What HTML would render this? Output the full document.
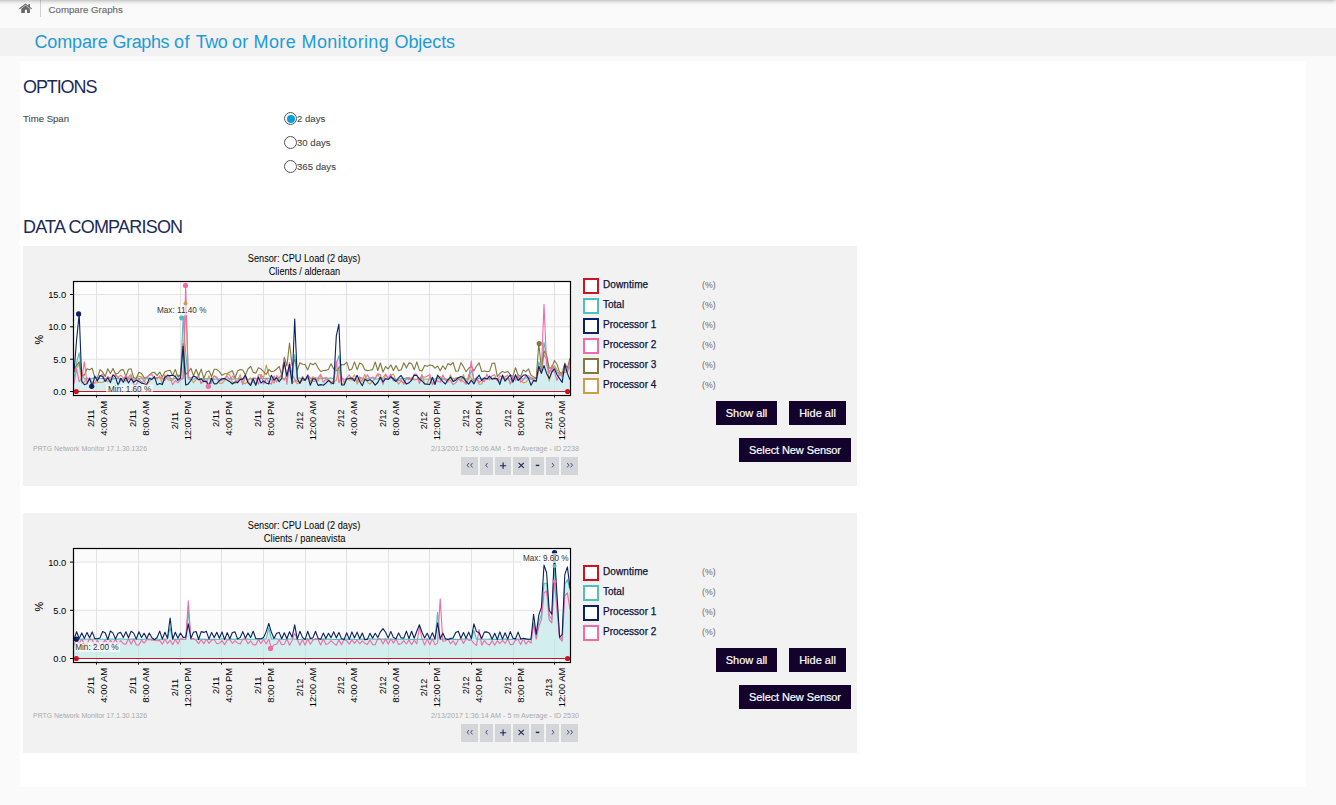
<!DOCTYPE html>
<html><head><meta charset="utf-8"><title>Compare Graphs</title>
<style>
html,body{margin:0;padding:0}
body{width:1336px;height:805px;overflow:hidden;background:#fafafa;font-family:"Liberation Sans", sans-serif;position:relative}
.abs{position:absolute}
#shadow{position:absolute;left:-20px;top:-20px;width:1356px;height:20px;background:#888;box-shadow:0 0 5px rgba(0,0,0,.42)}
#crumbtxt{position:absolute;left:48.5px;top:3.7px;font-size:9.7px;line-height:12px;color:#6a6a6a;white-space:nowrap;-webkit-text-stroke:0.15px #6a6a6a}
#band{position:absolute;left:0;top:28px;width:1336px;height:28px;background:#f2f2f2}
#title{position:absolute;left:34.5px;top:30px;font-size:18px;line-height:24px;color:#1f9bd7;white-space:pre}
#main{position:absolute;left:20px;top:61px;width:1286px;height:726px;background:#fff}
h2{position:absolute;margin:0;font-weight:normal;font-size:18px;line-height:22px;color:#1a2b5a;left:23px;white-space:nowrap}
.lbl{position:absolute;font-size:9.6px;line-height:12px;color:#484848;white-space:nowrap;-webkit-text-stroke:0.1px #484848}
.radio{position:absolute;left:284px;width:11px;height:11px;border:1px solid #555;border-radius:50%;background:#fff}
.radio.on:after{content:"";position:absolute;left:1.5px;top:1.5px;width:8px;height:8px;border-radius:50%;background:#0a9fdb}
.panel{position:absolute;left:23px;width:834px;height:240px;background:#f2f2f2}
.chart{position:absolute;left:0;top:0}
.lg{position:absolute;left:560px;height:16px;width:200px}
.bx{position:absolute;left:0;top:0;width:12px;height:12px;border:2px solid #000;background:#fff}
.nm{position:absolute;left:20px;top:1px;font-size:10px;line-height:12px;color:#0c1238;white-space:nowrap;-webkit-text-stroke:0.25px #0c1238}
.un{position:absolute;left:118.8px;top:1px;font-size:9.8px;line-height:12px;color:#6a6a6a;transform:scaleX(0.89);transform-origin:0 0}
.btn{position:absolute;height:24px;line-height:24px;background:#13022b;color:#fff;font-size:11px;text-align:center;white-space:nowrap;-webkit-text-stroke:0.2px #fff}
</style></head><body>
<div id="shadow"></div>
<svg class="abs" style="left:0;top:0" width="60" height="20" viewBox="0 0 60 20"><path d="M25.5 3.6 L28.4 5.7 V3.9 H30 V6.9 L32.1 8.5 L31.4 9.3 L25.5 5 L19.6 9.3 L18.9 8.5 Z M21.2 8.7 L25.5 5.6 L29.9 8.7 V13 H27 V9.8 H24.9 V13 H21.2 Z" fill="#6a6a6a"/><rect x="40" y="0" width="1" height="17" fill="#000" opacity="0.17"/></svg>
<div id="crumbtxt">Compare Graphs</div>
<div id="band"></div>
<div id="title"><span style="letter-spacing:-0.145px">Compare </span><span style="letter-spacing:-0.360px">Graphs </span><span style="letter-spacing:0.570px">of </span><span style="letter-spacing:-0.410px">Two </span><span style="letter-spacing:0.170px">or </span><span style="letter-spacing:0.400px">More </span><span style="letter-spacing:0.350px">Monitoring </span><span style="letter-spacing:-0.060px">Objects</span></div>
<div id="main"></div>
<h2 style="top:76px;letter-spacing:-1.1px">OPTIONS</h2>
<div class="lbl" style="left:23px;top:113px">Time Span</div>
<div class="radio on" style="top:112px"></div><div class="lbl r" style="left:297px;top:113px">2 days</div>
<div class="radio" style="top:136px"></div><div class="lbl r" style="left:297px;top:137px">30 days</div>
<div class="radio" style="top:160px"></div><div class="lbl r" style="left:297px;top:161px">365 days</div>
<h2 style="top:216px;letter-spacing:-0.78px">DATA COMPARISON</h2>
<div class="panel" style="top:246px">
<svg class="chart" width="834" height="240" viewBox="23 246 834 240" font-family='"Liberation Sans", sans-serif'>
<rect x="73.5" y="281.5" width="497.0" height="114.0" fill="#fff"/>
<rect x="73.5" y="359.2" width="497.0" height="32.3" fill="#fbfbfb"/>
<rect x="73.5" y="294.5" width="497.0" height="32.3" fill="#fbfbfb"/>
<line x1="96.5" y1="281.5" x2="96.5" y2="395.5" stroke="#e2e2e2" stroke-width="1"/>
<line x1="138.5" y1="281.5" x2="138.5" y2="395.5" stroke="#e2e2e2" stroke-width="1"/>
<line x1="180.5" y1="281.5" x2="180.5" y2="395.5" stroke="#e2e2e2" stroke-width="1"/>
<line x1="221.5" y1="281.5" x2="221.5" y2="395.5" stroke="#e2e2e2" stroke-width="1"/>
<line x1="263.5" y1="281.5" x2="263.5" y2="395.5" stroke="#e2e2e2" stroke-width="1"/>
<line x1="305.5" y1="281.5" x2="305.5" y2="395.5" stroke="#e2e2e2" stroke-width="1"/>
<line x1="346.5" y1="281.5" x2="346.5" y2="395.5" stroke="#e2e2e2" stroke-width="1"/>
<line x1="388.5" y1="281.5" x2="388.5" y2="395.5" stroke="#e2e2e2" stroke-width="1"/>
<line x1="429.5" y1="281.5" x2="429.5" y2="395.5" stroke="#e2e2e2" stroke-width="1"/>
<line x1="471.5" y1="281.5" x2="471.5" y2="395.5" stroke="#e2e2e2" stroke-width="1"/>
<line x1="513.5" y1="281.5" x2="513.5" y2="395.5" stroke="#e2e2e2" stroke-width="1"/>
<line x1="554.5" y1="281.5" x2="554.5" y2="395.5" stroke="#e2e2e2" stroke-width="1"/>
<line x1="73.5" y1="294.5" x2="570.5" y2="294.5" stroke="#e2e2e2" stroke-width="1"/>
<line x1="73.5" y1="326.8" x2="570.5" y2="326.8" stroke="#e2e2e2" stroke-width="1"/>
<line x1="73.5" y1="359.2" x2="570.5" y2="359.2" stroke="#e2e2e2" stroke-width="1"/>
<polygon points="74.0,391.5 74.0,378.6 76.6,362.4 79.2,352.7 81.8,372.1 84.4,378.9 87.0,378.5 89.6,379.2 92.2,378.4 94.8,377.8 97.4,378.3 100.0,378.5 102.6,378.3 105.2,378.7 107.8,377.9 110.4,379.0 113.0,378.9 115.5,378.6 118.1,378.4 120.7,378.2 123.3,379.0 125.9,378.3 128.5,378.0 131.1,379.0 133.7,379.2 136.3,378.8 138.9,378.7 141.5,378.0 144.1,378.9 146.7,378.0 149.3,378.1 151.9,378.3 154.5,378.1 157.1,378.2 159.7,377.8 162.3,379.1 164.9,378.0 167.5,377.8 170.1,378.3 172.7,379.1 175.3,378.2 177.9,378.7 180.5,378.0 183.1,317.8 185.7,352.7 188.3,378.9 190.9,379.3 193.5,379.2 196.1,378.2 198.6,379.3 201.2,378.7 203.8,378.4 206.4,378.9 209.0,378.8 211.6,378.2 214.2,379.0 216.8,379.1 219.4,379.0 222.0,378.6 224.6,379.2 227.2,379.2 229.8,378.3 232.4,379.1 235.0,378.5 237.6,378.7 240.2,378.5 242.8,378.7 245.4,378.3 248.0,379.2 250.6,378.7 253.2,378.3 255.8,378.7 258.4,379.3 261.0,378.2 263.6,378.6 266.2,378.4 268.8,378.4 271.4,379.3 274.0,378.7 276.6,378.6 279.2,379.3 281.7,379.1 284.3,378.3 286.9,379.2 289.5,368.9 292.1,378.4 294.7,354.6 297.3,377.9 299.9,378.0 302.5,379.0 305.1,378.5 307.7,378.8 310.3,378.0 312.9,378.2 315.5,377.8 318.1,378.3 320.7,378.7 323.3,378.4 325.9,377.9 328.5,378.2 331.1,377.9 333.7,379.1 336.3,364.3 338.9,355.3 341.5,378.0 344.1,379.2 346.7,378.9 349.3,377.8 351.9,378.4 354.5,378.7 357.1,379.2 359.7,377.9 362.3,378.1 364.8,379.0 367.4,378.6 370.0,378.1 372.6,377.8 375.2,379.2 377.8,378.7 380.4,378.3 383.0,379.0 385.6,378.2 388.2,379.3 390.8,378.2 393.4,377.9 396.0,379.3 398.6,379.0 401.2,378.6 403.8,378.4 406.4,379.2 409.0,378.2 411.6,378.1 414.2,379.0 416.8,379.2 419.4,378.1 422.0,378.8 424.6,379.0 427.2,379.2 429.8,378.9 432.4,379.0 435.0,379.1 437.6,378.2 440.2,379.3 442.8,379.2 445.4,378.8 447.9,379.3 450.5,378.7 453.1,378.2 455.7,378.8 458.3,378.0 460.9,377.9 463.5,379.1 466.1,378.7 468.7,379.3 471.3,370.2 473.9,378.9 476.5,379.2 479.1,378.2 481.7,378.3 484.3,378.8 486.9,378.6 489.5,378.9 492.1,378.3 494.7,378.2 497.3,379.3 499.9,379.3 502.5,378.4 505.1,379.2 507.7,378.5 510.3,379.3 512.9,378.8 515.5,377.9 518.1,378.0 520.7,378.6 523.3,378.9 525.9,377.8 528.5,377.9 531.0,379.2 533.6,377.9 536.2,378.6 538.8,361.8 541.4,369.5 544.0,342.4 546.6,356.6 549.2,372.7 551.8,368.2 554.4,366.3 557.0,372.1 559.6,374.0 562.2,376.6 564.8,366.3 567.4,370.8 570.0,366.9 570.0,391.5" fill="#d3eeee"/>
<line x1="96.5" y1="378.6" x2="96.5" y2="391.5" stroke="#c9dede" stroke-width="1" opacity="0.6"/>
<line x1="138.5" y1="378.6" x2="138.5" y2="391.5" stroke="#c9dede" stroke-width="1" opacity="0.6"/>
<line x1="180.5" y1="378.6" x2="180.5" y2="391.5" stroke="#c9dede" stroke-width="1" opacity="0.6"/>
<line x1="221.5" y1="378.6" x2="221.5" y2="391.5" stroke="#c9dede" stroke-width="1" opacity="0.6"/>
<line x1="263.5" y1="378.6" x2="263.5" y2="391.5" stroke="#c9dede" stroke-width="1" opacity="0.6"/>
<line x1="305.5" y1="378.6" x2="305.5" y2="391.5" stroke="#c9dede" stroke-width="1" opacity="0.6"/>
<line x1="346.5" y1="378.6" x2="346.5" y2="391.5" stroke="#c9dede" stroke-width="1" opacity="0.6"/>
<line x1="388.5" y1="378.6" x2="388.5" y2="391.5" stroke="#c9dede" stroke-width="1" opacity="0.6"/>
<line x1="429.5" y1="378.6" x2="429.5" y2="391.5" stroke="#c9dede" stroke-width="1" opacity="0.6"/>
<line x1="471.5" y1="378.6" x2="471.5" y2="391.5" stroke="#c9dede" stroke-width="1" opacity="0.6"/>
<line x1="513.5" y1="378.6" x2="513.5" y2="391.5" stroke="#c9dede" stroke-width="1" opacity="0.6"/>
<line x1="554.5" y1="378.6" x2="554.5" y2="391.5" stroke="#c9dede" stroke-width="1" opacity="0.6"/>
<polyline points="74.0,378.6 76.6,362.4 79.2,352.7 81.8,372.1 84.4,378.9 87.0,378.5 89.6,379.2 92.2,378.4 94.8,377.8 97.4,378.3 100.0,378.5 102.6,378.3 105.2,378.7 107.8,377.9 110.4,379.0 113.0,378.9 115.5,378.6 118.1,378.4 120.7,378.2 123.3,379.0 125.9,378.3 128.5,378.0 131.1,379.0 133.7,379.2 136.3,378.8 138.9,378.7 141.5,378.0 144.1,378.9 146.7,378.0 149.3,378.1 151.9,378.3 154.5,378.1 157.1,378.2 159.7,377.8 162.3,379.1 164.9,378.0 167.5,377.8 170.1,378.3 172.7,379.1 175.3,378.2 177.9,378.7 180.5,378.0 183.1,317.8 185.7,352.7 188.3,378.9 190.9,379.3 193.5,379.2 196.1,378.2 198.6,379.3 201.2,378.7 203.8,378.4 206.4,378.9 209.0,378.8 211.6,378.2 214.2,379.0 216.8,379.1 219.4,379.0 222.0,378.6 224.6,379.2 227.2,379.2 229.8,378.3 232.4,379.1 235.0,378.5 237.6,378.7 240.2,378.5 242.8,378.7 245.4,378.3 248.0,379.2 250.6,378.7 253.2,378.3 255.8,378.7 258.4,379.3 261.0,378.2 263.6,378.6 266.2,378.4 268.8,378.4 271.4,379.3 274.0,378.7 276.6,378.6 279.2,379.3 281.7,379.1 284.3,378.3 286.9,379.2 289.5,368.9 292.1,378.4 294.7,354.6 297.3,377.9 299.9,378.0 302.5,379.0 305.1,378.5 307.7,378.8 310.3,378.0 312.9,378.2 315.5,377.8 318.1,378.3 320.7,378.7 323.3,378.4 325.9,377.9 328.5,378.2 331.1,377.9 333.7,379.1 336.3,364.3 338.9,355.3 341.5,378.0 344.1,379.2 346.7,378.9 349.3,377.8 351.9,378.4 354.5,378.7 357.1,379.2 359.7,377.9 362.3,378.1 364.8,379.0 367.4,378.6 370.0,378.1 372.6,377.8 375.2,379.2 377.8,378.7 380.4,378.3 383.0,379.0 385.6,378.2 388.2,379.3 390.8,378.2 393.4,377.9 396.0,379.3 398.6,379.0 401.2,378.6 403.8,378.4 406.4,379.2 409.0,378.2 411.6,378.1 414.2,379.0 416.8,379.2 419.4,378.1 422.0,378.8 424.6,379.0 427.2,379.2 429.8,378.9 432.4,379.0 435.0,379.1 437.6,378.2 440.2,379.3 442.8,379.2 445.4,378.8 447.9,379.3 450.5,378.7 453.1,378.2 455.7,378.8 458.3,378.0 460.9,377.9 463.5,379.1 466.1,378.7 468.7,379.3 471.3,370.2 473.9,378.9 476.5,379.2 479.1,378.2 481.7,378.3 484.3,378.8 486.9,378.6 489.5,378.9 492.1,378.3 494.7,378.2 497.3,379.3 499.9,379.3 502.5,378.4 505.1,379.2 507.7,378.5 510.3,379.3 512.9,378.8 515.5,377.9 518.1,378.0 520.7,378.6 523.3,378.9 525.9,377.8 528.5,377.9 531.0,379.2 533.6,377.9 536.2,378.6 538.8,361.8 541.4,369.5 544.0,342.4 546.6,356.6 549.2,372.7 551.8,368.2 554.4,366.3 557.0,372.1 559.6,374.0 562.2,376.6 564.8,366.3 567.4,370.8 570.0,366.9" fill="none" stroke="#4dc0bb" stroke-width="1.1" stroke-linejoin="round"/>
<polyline points="74.0,372.1 76.6,368.2 79.2,364.3 81.8,383.0 84.4,382.0 87.0,377.7 89.6,380.2 92.2,382.4 94.8,383.3 97.4,382.4 100.0,382.5 102.6,382.3 105.2,380.3 107.8,381.6 110.4,379.7 113.0,379.0 115.5,374.5 118.1,377.3 120.7,375.1 123.3,377.9 125.9,381.4 128.5,377.0 131.1,374.4 133.7,382.1 136.3,378.6 138.9,376.2 141.5,376.9 144.1,381.2 146.7,384.1 149.3,381.7 151.9,378.7 154.5,378.1 157.1,379.3 159.7,375.7 162.3,384.2 164.9,374.7 167.5,379.3 170.1,380.5 172.7,380.2 175.3,375.2 177.9,374.8 180.5,378.8 183.1,378.6 185.7,303.5 188.3,376.0 190.9,379.2 193.5,382.6 196.1,379.6 198.6,375.4 201.2,383.7 203.8,378.9 206.4,382.2 209.0,375.7 211.6,383.3 214.2,375.9 216.8,377.1 219.4,383.3 222.0,383.3 224.6,380.7 227.2,374.2 229.8,374.9 232.4,382.3 235.0,383.5 237.6,380.8 240.2,374.6 242.8,382.8 245.4,383.8 248.0,380.7 250.6,377.9 253.2,382.2 255.8,383.8 258.4,374.9 261.0,374.7 263.6,377.8 266.2,365.0 268.8,374.5 271.4,379.7 274.0,383.3 276.6,375.3 279.2,378.0 281.7,375.7 284.3,380.3 286.9,375.3 289.5,363.7 292.1,383.4 294.7,380.4 297.3,383.9 299.9,381.9 302.5,376.2 305.1,380.2 307.7,375.6 310.3,382.1 312.9,376.5 315.5,379.4 318.1,381.1 320.7,375.9 323.3,378.4 325.9,377.4 328.5,379.1 331.1,384.3 333.7,381.7 336.3,380.6 338.9,366.9 341.5,383.2 344.1,384.2 346.7,379.0 349.3,380.1 351.9,378.9 354.5,374.7 357.1,384.1 359.7,379.5 362.3,381.3 364.8,374.2 367.4,382.1 370.0,384.2 372.6,381.2 375.2,378.4 377.8,374.1 380.4,379.4 383.0,377.4 385.6,374.5 388.2,379.0 390.8,375.5 393.4,374.1 396.0,380.0 398.6,384.1 401.2,380.8 403.8,383.1 406.4,377.5 409.0,379.9 411.6,378.3 414.2,380.0 416.8,379.3 419.4,380.2 422.0,374.4 424.6,384.0 427.2,383.8 429.8,376.9 432.4,384.0 435.0,382.5 437.6,377.5 440.2,376.7 442.8,378.5 445.4,379.5 447.9,382.1 450.5,374.7 453.1,381.3 455.7,377.8 458.3,377.5 460.9,381.8 463.5,374.5 466.1,384.3 468.7,374.6 471.3,378.1 473.9,380.7 476.5,378.2 479.1,384.3 481.7,384.0 484.3,377.7 486.9,378.9 489.5,377.7 492.1,379.1 494.7,377.4 497.3,379.2 499.9,381.9 502.5,377.0 505.1,378.1 507.7,378.5 510.3,383.2 512.9,380.2 515.5,378.8 518.1,376.6 520.7,380.3 523.3,382.9 525.9,382.2 528.5,378.9 531.0,377.1 533.6,378.9 536.2,381.8 538.8,369.5 541.4,372.1 544.0,354.3 546.6,359.2 549.2,381.2 551.8,370.8 554.4,365.6 557.0,369.5 559.6,375.3 562.2,373.4 564.8,369.5 567.4,372.1 570.0,361.8" fill="none" stroke="#cf9c4c" stroke-width="1.1" stroke-linejoin="round"/>
<polyline points="74.0,368.9 76.6,365.6 79.2,361.8 81.8,375.1 84.4,375.1 87.0,368.7 89.6,369.8 92.2,368.3 94.8,377.7 97.4,377.8 100.0,369.6 102.6,371.8 105.2,376.6 107.8,368.7 110.4,373.5 113.0,368.6 115.5,374.1 118.1,373.2 120.7,370.1 123.3,369.6 125.9,376.4 128.5,369.2 131.1,368.8 133.7,377.9 136.3,378.3 138.9,372.3 141.5,373.6 144.1,377.6 146.7,377.7 149.3,374.9 151.9,372.9 154.5,372.3 157.1,375.6 159.7,372.1 162.3,377.1 164.9,371.7 167.5,370.8 170.1,370.2 172.7,375.5 175.3,369.4 177.9,377.0 180.5,374.5 183.1,343.6 185.7,374.3 188.3,372.3 190.9,368.3 193.5,375.9 196.1,369.3 198.6,376.0 201.2,369.1 203.8,378.3 206.4,372.3 209.0,370.8 211.6,376.7 214.2,369.3 216.8,369.3 219.4,371.6 222.0,375.4 224.6,373.8 227.2,373.5 229.8,372.0 232.4,370.8 235.0,378.0 237.6,371.0 240.2,369.5 242.8,370.0 245.4,375.1 248.0,369.0 250.6,366.3 253.2,372.4 255.8,373.2 258.4,367.8 261.0,368.9 263.6,371.7 266.2,374.5 268.8,369.4 271.4,371.8 274.0,371.0 276.6,369.2 279.2,366.4 281.7,375.1 284.3,357.2 286.9,366.0 289.5,343.0 292.1,365.6 294.7,359.2 297.3,370.3 299.9,362.8 302.5,364.3 305.1,364.5 307.7,370.0 310.3,363.1 312.9,364.7 315.5,363.0 318.1,368.1 320.7,371.5 323.3,370.5 325.9,370.4 328.5,369.3 331.1,363.7 333.7,369.1 336.3,370.6 338.9,368.2 341.5,364.6 344.1,364.8 346.7,362.1 349.3,370.3 351.9,368.9 354.5,361.9 357.1,369.7 359.7,362.9 362.3,364.2 364.8,369.9 367.4,370.6 370.0,370.2 372.6,369.6 375.2,362.0 377.8,370.5 380.4,363.0 383.0,372.0 385.6,366.6 388.2,369.0 390.8,364.8 393.4,370.5 396.0,365.6 398.6,370.8 401.2,369.7 403.8,362.8 406.4,368.0 409.0,362.9 411.6,363.6 414.2,369.8 416.8,361.9 419.4,370.2 422.0,371.1 424.6,365.4 427.2,366.3 429.8,365.1 432.4,365.5 435.0,368.2 437.6,366.0 440.2,370.7 442.8,365.7 445.4,369.4 447.9,363.6 450.5,365.1 453.1,362.5 455.7,371.2 458.3,371.0 460.9,362.6 463.5,366.8 466.1,371.8 468.7,368.2 471.3,366.2 473.9,370.9 476.5,366.1 479.1,362.8 481.7,371.5 484.3,371.0 486.9,371.6 489.5,371.3 492.1,363.3 494.7,363.1 497.3,376.7 499.9,373.5 502.5,371.4 505.1,372.4 507.7,371.4 510.3,374.7 512.9,376.6 515.5,367.7 518.1,375.0 520.7,376.4 523.3,369.9 525.9,371.7 528.5,368.8 531.0,375.3 533.6,376.9 536.2,378.6 538.8,343.6 541.4,368.2 544.0,350.8 546.6,355.3 549.2,368.2 551.8,367.6 554.4,360.5 557.0,364.3 559.6,372.1 562.2,373.4 564.8,363.0 567.4,368.2 570.0,357.9" fill="none" stroke="#7f7a3e" stroke-width="1.1" stroke-linejoin="round"/>
<polyline points="74.0,383.7 76.6,368.9 79.2,381.8 81.8,377.7 84.4,361.8 87.0,383.2 89.6,377.7 92.2,383.4 94.8,382.7 97.4,379.3 100.0,376.6 102.6,374.0 105.2,380.6 107.8,376.5 110.4,378.2 113.0,375.2 115.5,375.0 118.1,377.4 120.7,381.2 123.3,379.6 125.9,375.1 128.5,379.6 131.1,376.2 133.7,384.6 136.3,384.6 138.9,378.8 141.5,382.0 144.1,381.7 146.7,376.9 149.3,375.5 151.9,374.6 154.5,378.5 157.1,377.6 159.7,377.2 162.3,378.1 164.9,380.6 167.5,374.4 170.1,377.4 172.7,384.7 175.3,380.5 177.9,382.8 180.5,379.8 183.1,378.6 185.7,285.4 188.3,377.3 190.9,378.2 193.5,376.0 196.1,377.2 198.6,376.7 201.2,383.5 203.8,379.8 206.4,382.6 209.0,386.3 211.6,380.3 214.2,375.9 216.8,378.1 219.4,381.0 222.0,380.2 224.6,378.1 227.2,376.2 229.8,379.8 232.4,376.2 235.0,378.7 237.6,383.0 240.2,377.7 242.8,384.5 245.4,376.1 248.0,381.5 250.6,384.7 253.2,378.1 255.8,378.1 258.4,384.2 261.0,374.7 263.6,384.1 266.2,378.3 268.8,382.2 271.4,384.2 274.0,375.8 276.6,382.0 279.2,377.7 281.7,374.1 284.3,359.8 286.9,384.5 289.5,362.4 292.1,373.9 294.7,379.5 297.3,381.3 299.9,382.6 302.5,380.1 305.1,380.4 307.7,374.6 310.3,378.2 312.9,381.4 315.5,381.3 318.1,377.9 320.7,374.3 323.3,382.3 325.9,379.4 328.5,379.9 331.1,382.2 333.7,380.9 336.3,361.1 338.9,382.8 341.5,376.8 344.1,382.6 346.7,377.9 349.3,374.9 351.9,380.2 354.5,378.6 357.1,381.6 359.7,376.8 362.3,379.0 364.8,378.8 367.4,374.9 370.0,378.9 372.6,377.1 375.2,378.5 377.8,373.7 380.4,374.7 383.0,384.6 385.6,374.0 388.2,378.3 390.8,374.1 393.4,381.1 396.0,380.1 398.6,380.7 401.2,380.0 403.8,384.3 406.4,377.8 409.0,377.5 411.6,380.2 414.2,374.1 416.8,374.3 419.4,383.5 422.0,376.3 424.6,377.2 427.2,376.2 429.8,374.4 432.4,384.7 435.0,381.4 437.6,380.7 440.2,382.4 442.8,375.0 445.4,380.2 447.9,379.5 450.5,380.6 453.1,384.6 455.7,382.9 458.3,379.2 460.9,380.0 463.5,381.6 466.1,384.1 468.7,378.0 471.3,361.1 473.9,381.2 476.5,377.2 479.1,382.4 481.7,380.3 484.3,381.8 486.9,374.1 489.5,380.0 492.1,375.7 494.7,374.9 497.3,380.7 499.9,375.7 502.5,377.3 505.1,376.8 507.7,375.2 510.3,384.2 512.9,376.3 515.5,380.5 518.1,374.9 520.7,382.2 523.3,380.0 525.9,375.9 528.5,375.7 531.0,378.3 533.6,380.9 536.2,381.2 538.8,366.3 541.4,370.2 544.0,304.2 546.6,364.3 549.2,373.4 551.8,365.6 554.4,372.1 557.0,380.5 559.6,373.4 562.2,374.7 564.8,372.1 567.4,372.1 570.0,360.5" fill="none" stroke="#f06ba8" stroke-width="1.1" stroke-linejoin="round"/>
<polyline points="74.0,372.1 76.6,339.8 79.2,313.9 81.8,381.2 84.4,384.8 87.0,383.7 89.6,378.3 92.2,386.3 94.8,376.1 97.4,381.1 100.0,375.6 102.6,376.5 105.2,381.5 107.8,377.7 110.4,382.6 113.0,374.9 115.5,377.2 118.1,385.5 120.7,378.2 123.3,382.3 125.9,377.4 128.5,383.0 131.1,378.7 133.7,382.4 136.3,380.1 138.9,381.5 141.5,383.1 144.1,383.8 146.7,385.0 149.3,378.4 151.9,379.4 154.5,376.6 157.1,384.8 159.7,383.6 162.3,384.6 164.9,377.3 167.5,375.6 170.1,375.6 172.7,375.3 175.3,376.4 177.9,380.4 180.5,378.2 183.1,346.2 185.7,385.0 188.3,383.9 190.9,380.2 193.5,376.1 196.1,377.2 198.6,379.8 201.2,378.8 203.8,381.6 206.4,381.3 209.0,385.5 211.6,378.1 214.2,383.9 216.8,383.6 219.4,380.6 222.0,378.8 224.6,378.5 227.2,380.1 229.8,381.7 232.4,384.0 235.0,381.8 237.6,382.7 240.2,379.5 242.8,379.1 245.4,375.0 248.0,382.7 250.6,385.5 253.2,378.7 255.8,385.4 258.4,377.0 261.0,383.1 263.6,380.9 266.2,383.0 268.8,384.0 271.4,375.2 274.0,380.3 276.6,377.5 279.2,381.8 281.7,378.3 284.3,362.4 286.9,376.1 289.5,364.3 292.1,383.7 294.7,319.1 297.3,378.6 299.9,383.4 302.5,377.8 305.1,380.4 307.7,375.6 310.3,385.3 312.9,378.7 315.5,379.1 318.1,385.4 320.7,384.6 323.3,385.2 325.9,383.2 328.5,380.5 331.1,382.7 333.7,383.7 336.3,335.9 338.9,324.2 341.5,385.0 344.1,385.0 346.7,378.8 349.3,378.5 351.9,378.0 354.5,381.1 357.1,375.2 359.7,381.4 362.3,385.7 364.8,379.4 367.4,380.7 370.0,379.7 372.6,381.6 375.2,385.1 377.8,382.5 380.4,377.3 383.0,382.0 385.6,378.7 388.2,379.5 390.8,376.7 393.4,379.0 396.0,381.5 398.6,377.7 401.2,375.5 403.8,380.1 406.4,384.1 409.0,382.8 411.6,380.2 414.2,375.1 416.8,375.5 419.4,378.8 422.0,381.0 424.6,383.9 427.2,384.2 429.8,384.4 432.4,377.2 435.0,384.5 437.6,375.1 440.2,378.5 442.8,381.6 445.4,384.0 447.9,379.8 450.5,377.0 453.1,381.4 455.7,380.2 458.3,377.7 460.9,376.6 463.5,377.6 466.1,381.5 468.7,384.1 471.3,380.1 473.9,383.9 476.5,378.8 479.1,375.1 481.7,380.4 484.3,377.9 486.9,379.1 489.5,376.1 492.1,379.1 494.7,378.5 497.3,378.9 499.9,384.4 502.5,375.0 505.1,381.2 507.7,377.9 510.3,375.0 512.9,382.3 515.5,374.8 518.1,380.5 520.7,378.0 523.3,375.3 525.9,374.7 528.5,378.4 531.0,385.3 533.6,380.4 536.2,381.2 538.8,366.3 541.4,373.4 544.0,365.6 546.6,373.4 549.2,378.6 551.8,372.1 554.4,368.9 557.0,374.7 559.6,378.6 562.2,382.4 564.8,364.3 567.4,373.4 570.0,379.9" fill="none" stroke="#0b2161" stroke-width="1.1" stroke-linejoin="round"/>
<line x1="73.5" y1="391.5" x2="570.5" y2="391.5" stroke="#d0111f" stroke-width="1.15"/>
<circle cx="76.3" cy="391.5" r="2.6" fill="#d0111f"/>
<circle cx="567.6" cy="391.5" r="2.6" fill="#d0111f"/>
<circle cx="78.6" cy="313.9" r="2.6" fill="#0b2161"/>
<circle cx="91.7" cy="386.3" r="2.6" fill="#0b2161"/>
<circle cx="181.8" cy="317.8" r="2.6" fill="#4dc0bb"/>
<circle cx="185.5" cy="285.4" r="2.6" fill="#f06ba8"/>
<circle cx="185.5" cy="303.5" r="2.0" fill="#cf9c4c"/>
<circle cx="208.3" cy="386.3" r="2.6" fill="#f06ba8"/>
<circle cx="539.2" cy="343.6" r="2.6" fill="#7f7a3e"/>
<rect x="73.5" y="281.5" width="497.0" height="114.0" fill="none" stroke="#000" stroke-width="1.2"/>
<line x1="96.5" y1="395.5" x2="96.5" y2="397.6" stroke="#000" stroke-width="1"/>
<line x1="138.5" y1="395.5" x2="138.5" y2="397.6" stroke="#000" stroke-width="1"/>
<line x1="180.5" y1="395.5" x2="180.5" y2="397.6" stroke="#000" stroke-width="1"/>
<line x1="221.5" y1="395.5" x2="221.5" y2="397.6" stroke="#000" stroke-width="1"/>
<line x1="263.5" y1="395.5" x2="263.5" y2="397.6" stroke="#000" stroke-width="1"/>
<line x1="305.5" y1="395.5" x2="305.5" y2="397.6" stroke="#000" stroke-width="1"/>
<line x1="346.5" y1="395.5" x2="346.5" y2="397.6" stroke="#000" stroke-width="1"/>
<line x1="388.5" y1="395.5" x2="388.5" y2="397.6" stroke="#000" stroke-width="1"/>
<line x1="429.5" y1="395.5" x2="429.5" y2="397.6" stroke="#000" stroke-width="1"/>
<line x1="471.5" y1="395.5" x2="471.5" y2="397.6" stroke="#000" stroke-width="1"/>
<line x1="513.5" y1="395.5" x2="513.5" y2="397.6" stroke="#000" stroke-width="1"/>
<line x1="554.5" y1="395.5" x2="554.5" y2="397.6" stroke="#000" stroke-width="1"/>
<line x1="70.0" y1="294.5" x2="73.5" y2="294.5" stroke="#000" stroke-width="1"/>
<line x1="70.0" y1="326.8" x2="73.5" y2="326.8" stroke="#000" stroke-width="1"/>
<line x1="70.0" y1="359.2" x2="73.5" y2="359.2" stroke="#000" stroke-width="1"/>
<line x1="70.0" y1="391.5" x2="73.5" y2="391.5" stroke="#000" stroke-width="1"/>
<text x="66.3" y="297.9" font-size="9.3" text-anchor="end" fill="#000">15.0</text>
<text x="66.3" y="330.2" font-size="9.3" text-anchor="end" fill="#000">10.0</text>
<text x="66.3" y="362.6" font-size="9.3" text-anchor="end" fill="#000">5.0</text>
<text x="66.3" y="394.9" font-size="9.3" text-anchor="end" fill="#000">0.0</text>
<text transform="translate(43.3,339.6) rotate(-90)" font-size="10.8" text-anchor="middle" fill="#000" stroke="#000" stroke-width="0.1">%</text>
<text transform="translate(93.7,418.3) rotate(-90)" font-size="9.6" text-anchor="middle" textLength="17.5" lengthAdjust="spacingAndGlyphs" fill="#000">2/11</text>
<text transform="translate(107.1,400.8) rotate(-90)" font-size="9.6" text-anchor="end" textLength="35.0" lengthAdjust="spacingAndGlyphs" fill="#000">4:00 AM</text>
<text transform="translate(135.7,418.3) rotate(-90)" font-size="9.6" text-anchor="middle" textLength="17.5" lengthAdjust="spacingAndGlyphs" fill="#000">2/11</text>
<text transform="translate(149.1,400.8) rotate(-90)" font-size="9.6" text-anchor="end" textLength="35.0" lengthAdjust="spacingAndGlyphs" fill="#000">8:00 AM</text>
<text transform="translate(177.7,420.6) rotate(-90)" font-size="9.6" text-anchor="middle" textLength="17.5" lengthAdjust="spacingAndGlyphs" fill="#000">2/11</text>
<text transform="translate(191.1,400.8) rotate(-90)" font-size="9.6" text-anchor="end" textLength="39.5" lengthAdjust="spacingAndGlyphs" fill="#000">12:00 PM</text>
<text transform="translate(218.7,418.3) rotate(-90)" font-size="9.6" text-anchor="middle" textLength="17.5" lengthAdjust="spacingAndGlyphs" fill="#000">2/11</text>
<text transform="translate(232.1,400.8) rotate(-90)" font-size="9.6" text-anchor="end" textLength="35.0" lengthAdjust="spacingAndGlyphs" fill="#000">4:00 PM</text>
<text transform="translate(260.7,418.3) rotate(-90)" font-size="9.6" text-anchor="middle" textLength="17.5" lengthAdjust="spacingAndGlyphs" fill="#000">2/11</text>
<text transform="translate(274.1,400.8) rotate(-90)" font-size="9.6" text-anchor="end" textLength="35.0" lengthAdjust="spacingAndGlyphs" fill="#000">8:00 PM</text>
<text transform="translate(302.7,420.6) rotate(-90)" font-size="9.6" text-anchor="middle" textLength="17.5" lengthAdjust="spacingAndGlyphs" fill="#000">2/12</text>
<text transform="translate(316.1,400.8) rotate(-90)" font-size="9.6" text-anchor="end" textLength="39.5" lengthAdjust="spacingAndGlyphs" fill="#000">12:00 AM</text>
<text transform="translate(343.7,418.3) rotate(-90)" font-size="9.6" text-anchor="middle" textLength="17.5" lengthAdjust="spacingAndGlyphs" fill="#000">2/12</text>
<text transform="translate(357.1,400.8) rotate(-90)" font-size="9.6" text-anchor="end" textLength="35.0" lengthAdjust="spacingAndGlyphs" fill="#000">4:00 AM</text>
<text transform="translate(385.7,418.3) rotate(-90)" font-size="9.6" text-anchor="middle" textLength="17.5" lengthAdjust="spacingAndGlyphs" fill="#000">2/12</text>
<text transform="translate(399.1,400.8) rotate(-90)" font-size="9.6" text-anchor="end" textLength="35.0" lengthAdjust="spacingAndGlyphs" fill="#000">8:00 AM</text>
<text transform="translate(426.7,420.6) rotate(-90)" font-size="9.6" text-anchor="middle" textLength="17.5" lengthAdjust="spacingAndGlyphs" fill="#000">2/12</text>
<text transform="translate(440.1,400.8) rotate(-90)" font-size="9.6" text-anchor="end" textLength="39.5" lengthAdjust="spacingAndGlyphs" fill="#000">12:00 PM</text>
<text transform="translate(468.7,418.3) rotate(-90)" font-size="9.6" text-anchor="middle" textLength="17.5" lengthAdjust="spacingAndGlyphs" fill="#000">2/12</text>
<text transform="translate(482.1,400.8) rotate(-90)" font-size="9.6" text-anchor="end" textLength="35.0" lengthAdjust="spacingAndGlyphs" fill="#000">4:00 PM</text>
<text transform="translate(510.7,418.3) rotate(-90)" font-size="9.6" text-anchor="middle" textLength="17.5" lengthAdjust="spacingAndGlyphs" fill="#000">2/12</text>
<text transform="translate(524.1,400.8) rotate(-90)" font-size="9.6" text-anchor="end" textLength="35.0" lengthAdjust="spacingAndGlyphs" fill="#000">8:00 PM</text>
<text transform="translate(551.7,420.6) rotate(-90)" font-size="9.6" text-anchor="middle" textLength="17.5" lengthAdjust="spacingAndGlyphs" fill="#000">2/13</text>
<text transform="translate(565.1,400.8) rotate(-90)" font-size="9.6" text-anchor="end" textLength="39.5" lengthAdjust="spacingAndGlyphs" fill="#000">12:00 AM</text>
<text x="304" y="261.8" font-size="10" text-anchor="middle" textLength="112.4" lengthAdjust="spacingAndGlyphs" fill="#000">Sensor: CPU Load (2 days)</text>
<text x="304.4" y="274.7" font-size="10" text-anchor="middle" textLength="71.4" lengthAdjust="spacingAndGlyphs" fill="#000">Clients / alderaan</text>
<rect x="155" y="305.3" width="53" height="10" fill="#fff" opacity="0.7"/>
<text x="157" y="313.3" font-size="8.2" fill="#333">Max: 11.40 %</text>
<rect x="106" y="384.5" width="47" height="9" fill="#fff" opacity="0.6"/>
<text x="108" y="392.3" font-size="8.2" fill="#333">Min: 1.60 %</text>
<text x="33" y="450.5" font-size="7.2" fill="#a9a9a9" textLength="114" lengthAdjust="spacingAndGlyphs">PRTG Network Monitor 17.1.30.1326</text>
<text x="431" y="450.5" font-size="7.2" fill="#a9a9a9" textLength="148" lengthAdjust="spacingAndGlyphs">2/13/2017 1:36:06 AM - 5 m Average - ID 2238</text>
<rect x="461" y="457" width="17" height="18" fill="#d4d5d8"/>
<rect x="480" y="457" width="13" height="18" fill="#d4d5d8"/>
<rect x="495" y="457" width="16" height="18" fill="#d4d5d8"/>
<rect x="513" y="457" width="16" height="18" fill="#d4d5d8"/>
<rect x="531" y="457" width="13" height="18" fill="#d4d5d8"/>
<rect x="546" y="457" width="13" height="18" fill="#d4d5d8"/>
<rect x="561" y="457" width="17" height="18" fill="#d4d5d8"/>
<path d="M468.7 463.3 L467.2 465.2 L468.7 467.1" fill="none" stroke="#3a477a" stroke-width="0.95" stroke-linejoin="round" stroke-linecap="round"/>
<path d="M472.2 463.3 L470.7 465.2 L472.2 467.1" fill="none" stroke="#3a477a" stroke-width="0.95" stroke-linejoin="round" stroke-linecap="round"/>
<path d="M487.3 463.3 L485.8 465.2 L487.3 467.1" fill="none" stroke="#3a477a" stroke-width="0.95" stroke-linejoin="round" stroke-linecap="round"/>
<path d="M552.3 463.3 L553.8 465.2 L552.3 467.1" fill="none" stroke="#3a477a" stroke-width="0.95" stroke-linejoin="round" stroke-linecap="round"/>
<path d="M567.4 463.3 L568.9 465.2 L567.4 467.1" fill="none" stroke="#3a477a" stroke-width="0.95" stroke-linejoin="round" stroke-linecap="round"/>
<path d="M570.9 463.3 L572.4 465.2 L570.9 467.1" fill="none" stroke="#3a477a" stroke-width="0.95" stroke-linejoin="round" stroke-linecap="round"/>
<path d="M500 465.7 H506.2 M503.1 462.6 V468.8" stroke="#1a2a5e" stroke-width="1.15" fill="none"/>
<path d="M518.6 462.9 L523.8 467.9 M523.8 462.9 L518.6 467.9" stroke="#1a2a5e" stroke-width="1.15" fill="none"/>
<path d="M535.8 465.4 H539.3" stroke="#1a2a5e" stroke-width="1.4" fill="none"/>
</svg>
<div class="lg" style="top:32px"><span class="bx" style="border-color:#d0111f"></span><span class="nm" style="letter-spacing:0.1px">Downtime</span><span class="un">(%)</span></div>
<div class="lg" style="top:52px"><span class="bx" style="border-color:#4dc0bb"></span><span class="nm">Total</span><span class="un">(%)</span></div>
<div class="lg" style="top:72px"><span class="bx" style="border-color:#0b2161"></span><span class="nm">Processor 1</span><span class="un">(%)</span></div>
<div class="lg" style="top:92px"><span class="bx" style="border-color:#f06ba8"></span><span class="nm">Processor 2</span><span class="un">(%)</span></div>
<div class="lg" style="top:112px"><span class="bx" style="border-color:#7f7a3e"></span><span class="nm">Processor 3</span><span class="un">(%)</span></div>
<div class="lg" style="top:132px"><span class="bx" style="border-color:#cf9c4c"></span><span class="nm">Processor 4</span><span class="un">(%)</span></div>
<div class="btn" style="left:693px;top:155px;width:61px">Show all</div>
<div class="btn" style="left:766px;top:155px;width:57px">Hide all</div>
<div class="btn" style="left:716px;top:192px;width:112px;letter-spacing:-0.1px">Select New Sensor</div>
</div>
<div class="panel" style="top:513px">
<svg class="chart" width="834" height="240" viewBox="23 513 834 240" font-family='"Liberation Sans", sans-serif'>
<rect x="73.5" y="548.5" width="497.0" height="114.0" fill="#fff"/>
<rect x="73.5" y="610.3" width="497.0" height="48.2" fill="#fbfbfb"/>
<rect x="73.5" y="548.5" width="497.0" height="13.6" fill="#fbfbfb"/>
<line x1="96.5" y1="548.5" x2="96.5" y2="662.5" stroke="#e2e2e2" stroke-width="1"/>
<line x1="138.5" y1="548.5" x2="138.5" y2="662.5" stroke="#e2e2e2" stroke-width="1"/>
<line x1="180.5" y1="548.5" x2="180.5" y2="662.5" stroke="#e2e2e2" stroke-width="1"/>
<line x1="221.5" y1="548.5" x2="221.5" y2="662.5" stroke="#e2e2e2" stroke-width="1"/>
<line x1="263.5" y1="548.5" x2="263.5" y2="662.5" stroke="#e2e2e2" stroke-width="1"/>
<line x1="305.5" y1="548.5" x2="305.5" y2="662.5" stroke="#e2e2e2" stroke-width="1"/>
<line x1="346.5" y1="548.5" x2="346.5" y2="662.5" stroke="#e2e2e2" stroke-width="1"/>
<line x1="388.5" y1="548.5" x2="388.5" y2="662.5" stroke="#e2e2e2" stroke-width="1"/>
<line x1="429.5" y1="548.5" x2="429.5" y2="662.5" stroke="#e2e2e2" stroke-width="1"/>
<line x1="471.5" y1="548.5" x2="471.5" y2="662.5" stroke="#e2e2e2" stroke-width="1"/>
<line x1="513.5" y1="548.5" x2="513.5" y2="662.5" stroke="#e2e2e2" stroke-width="1"/>
<line x1="554.5" y1="548.5" x2="554.5" y2="662.5" stroke="#e2e2e2" stroke-width="1"/>
<line x1="73.5" y1="562.1" x2="570.5" y2="562.1" stroke="#e2e2e2" stroke-width="1"/>
<line x1="73.5" y1="610.3" x2="570.5" y2="610.3" stroke="#e2e2e2" stroke-width="1"/>
<polygon points="74.0,658.5 74.0,639.4 76.6,639.4 79.2,639.4 81.8,639.1 84.4,639.0 87.0,639.3 89.6,639.0 92.2,639.2 94.8,638.9 97.4,639.0 100.0,639.2 102.6,639.2 105.2,639.2 107.8,639.4 110.4,639.0 113.0,639.0 115.5,639.4 118.1,639.1 120.7,638.9 123.3,639.0 125.9,639.3 128.5,639.2 131.1,639.1 133.7,639.1 136.3,639.0 138.9,639.3 141.5,639.4 144.1,639.3 146.7,639.0 149.3,639.1 151.9,639.3 154.5,639.4 157.1,639.1 159.7,639.2 162.3,639.3 164.9,639.3 167.5,639.0 170.1,627.7 172.7,639.1 175.3,639.3 177.9,639.5 180.5,639.0 183.1,639.3 185.7,639.4 188.3,610.3 190.9,639.3 193.5,639.3 196.1,639.2 198.6,639.4 201.2,639.0 203.8,639.4 206.4,639.4 209.0,639.5 211.6,639.2 214.2,639.0 216.8,639.3 219.4,639.5 222.0,638.9 224.6,639.0 227.2,639.3 229.8,638.9 232.4,639.4 235.0,639.0 237.6,639.1 240.2,639.4 242.8,639.2 245.4,639.0 248.0,639.1 250.6,639.2 253.2,639.3 255.8,639.2 258.4,639.3 261.0,639.3 263.6,639.0 266.2,639.0 268.8,627.7 271.4,639.2 274.0,639.0 276.6,638.9 279.2,639.4 281.7,639.0 284.3,639.5 286.9,639.1 289.5,639.0 292.1,639.0 294.7,639.0 297.3,639.4 299.9,639.5 302.5,639.0 305.1,639.1 307.7,639.1 310.3,639.0 312.9,639.4 315.5,639.5 318.1,639.3 320.7,639.4 323.3,639.0 325.9,639.4 328.5,639.0 331.1,639.3 333.7,639.4 336.3,639.5 338.9,639.2 341.5,639.4 344.1,639.2 346.7,639.0 349.3,639.5 351.9,639.0 354.5,639.3 357.1,639.5 359.7,639.3 362.3,639.3 364.8,639.1 367.4,639.0 370.0,638.9 372.6,639.3 375.2,639.1 377.8,639.3 380.4,639.4 383.0,639.0 385.6,639.1 388.2,639.2 390.8,639.2 393.4,639.4 396.0,639.0 398.6,639.3 401.2,639.2 403.8,639.2 406.4,639.2 409.0,639.3 411.6,639.4 414.2,639.5 416.8,639.3 419.4,639.2 422.0,639.4 424.6,639.3 427.2,639.1 429.8,639.1 432.4,639.0 435.0,639.4 437.6,612.2 440.2,639.4 442.8,639.1 445.4,639.0 447.9,639.4 450.5,639.5 453.1,639.4 455.7,639.3 458.3,639.5 460.9,639.4 463.5,639.0 466.1,638.9 468.7,639.0 471.3,639.5 473.9,630.5 476.5,639.1 479.1,639.0 481.7,639.2 484.3,639.2 486.9,639.3 489.5,639.0 492.1,639.3 494.7,639.4 497.3,639.4 499.9,639.4 502.5,639.2 505.1,639.1 507.7,639.4 510.3,639.4 512.9,639.4 515.5,639.1 518.1,639.0 520.7,639.5 523.3,639.4 525.9,639.3 528.5,639.4 531.0,639.2 533.6,622.8 536.2,636.3 538.8,621.9 541.4,614.2 544.0,583.3 546.6,583.3 549.2,615.1 551.8,619.5 554.4,566.0 557.0,601.6 559.6,637.3 562.2,638.7 564.8,584.3 567.4,579.5 570.0,590.1 570.0,658.5" fill="#d3eeee"/>
<line x1="96.5" y1="639.2" x2="96.5" y2="658.5" stroke="#c9dede" stroke-width="1" opacity="0.6"/>
<line x1="138.5" y1="639.2" x2="138.5" y2="658.5" stroke="#c9dede" stroke-width="1" opacity="0.6"/>
<line x1="180.5" y1="639.2" x2="180.5" y2="658.5" stroke="#c9dede" stroke-width="1" opacity="0.6"/>
<line x1="221.5" y1="639.2" x2="221.5" y2="658.5" stroke="#c9dede" stroke-width="1" opacity="0.6"/>
<line x1="263.5" y1="639.2" x2="263.5" y2="658.5" stroke="#c9dede" stroke-width="1" opacity="0.6"/>
<line x1="305.5" y1="639.2" x2="305.5" y2="658.5" stroke="#c9dede" stroke-width="1" opacity="0.6"/>
<line x1="346.5" y1="639.2" x2="346.5" y2="658.5" stroke="#c9dede" stroke-width="1" opacity="0.6"/>
<line x1="388.5" y1="639.2" x2="388.5" y2="658.5" stroke="#c9dede" stroke-width="1" opacity="0.6"/>
<line x1="429.5" y1="639.2" x2="429.5" y2="658.5" stroke="#c9dede" stroke-width="1" opacity="0.6"/>
<line x1="471.5" y1="639.2" x2="471.5" y2="658.5" stroke="#c9dede" stroke-width="1" opacity="0.6"/>
<line x1="513.5" y1="639.2" x2="513.5" y2="658.5" stroke="#c9dede" stroke-width="1" opacity="0.6"/>
<line x1="554.5" y1="639.2" x2="554.5" y2="658.5" stroke="#c9dede" stroke-width="1" opacity="0.6"/>
<polyline points="74.0,639.4 76.6,639.4 79.2,639.4 81.8,639.1 84.4,639.0 87.0,639.3 89.6,639.0 92.2,639.2 94.8,638.9 97.4,639.0 100.0,639.2 102.6,639.2 105.2,639.2 107.8,639.4 110.4,639.0 113.0,639.0 115.5,639.4 118.1,639.1 120.7,638.9 123.3,639.0 125.9,639.3 128.5,639.2 131.1,639.1 133.7,639.1 136.3,639.0 138.9,639.3 141.5,639.4 144.1,639.3 146.7,639.0 149.3,639.1 151.9,639.3 154.5,639.4 157.1,639.1 159.7,639.2 162.3,639.3 164.9,639.3 167.5,639.0 170.1,627.7 172.7,639.1 175.3,639.3 177.9,639.5 180.5,639.0 183.1,639.3 185.7,639.4 188.3,610.3 190.9,639.3 193.5,639.3 196.1,639.2 198.6,639.4 201.2,639.0 203.8,639.4 206.4,639.4 209.0,639.5 211.6,639.2 214.2,639.0 216.8,639.3 219.4,639.5 222.0,638.9 224.6,639.0 227.2,639.3 229.8,638.9 232.4,639.4 235.0,639.0 237.6,639.1 240.2,639.4 242.8,639.2 245.4,639.0 248.0,639.1 250.6,639.2 253.2,639.3 255.8,639.2 258.4,639.3 261.0,639.3 263.6,639.0 266.2,639.0 268.8,627.7 271.4,639.2 274.0,639.0 276.6,638.9 279.2,639.4 281.7,639.0 284.3,639.5 286.9,639.1 289.5,639.0 292.1,639.0 294.7,639.0 297.3,639.4 299.9,639.5 302.5,639.0 305.1,639.1 307.7,639.1 310.3,639.0 312.9,639.4 315.5,639.5 318.1,639.3 320.7,639.4 323.3,639.0 325.9,639.4 328.5,639.0 331.1,639.3 333.7,639.4 336.3,639.5 338.9,639.2 341.5,639.4 344.1,639.2 346.7,639.0 349.3,639.5 351.9,639.0 354.5,639.3 357.1,639.5 359.7,639.3 362.3,639.3 364.8,639.1 367.4,639.0 370.0,638.9 372.6,639.3 375.2,639.1 377.8,639.3 380.4,639.4 383.0,639.0 385.6,639.1 388.2,639.2 390.8,639.2 393.4,639.4 396.0,639.0 398.6,639.3 401.2,639.2 403.8,639.2 406.4,639.2 409.0,639.3 411.6,639.4 414.2,639.5 416.8,639.3 419.4,639.2 422.0,639.4 424.6,639.3 427.2,639.1 429.8,639.1 432.4,639.0 435.0,639.4 437.6,612.2 440.2,639.4 442.8,639.1 445.4,639.0 447.9,639.4 450.5,639.5 453.1,639.4 455.7,639.3 458.3,639.5 460.9,639.4 463.5,639.0 466.1,638.9 468.7,639.0 471.3,639.5 473.9,630.5 476.5,639.1 479.1,639.0 481.7,639.2 484.3,639.2 486.9,639.3 489.5,639.0 492.1,639.3 494.7,639.4 497.3,639.4 499.9,639.4 502.5,639.2 505.1,639.1 507.7,639.4 510.3,639.4 512.9,639.4 515.5,639.1 518.1,639.0 520.7,639.5 523.3,639.4 525.9,639.3 528.5,639.4 531.0,639.2 533.6,622.8 536.2,636.3 538.8,621.9 541.4,614.2 544.0,583.3 546.6,583.3 549.2,615.1 551.8,619.5 554.4,566.0 557.0,601.6 559.6,637.3 562.2,638.7 564.8,584.3 567.4,579.5 570.0,590.1" fill="none" stroke="#4dc0bb" stroke-width="1.1" stroke-linejoin="round"/>
<polyline points="74.0,644.7 76.6,640.3 79.2,643.6 81.8,639.0 84.4,644.3 87.0,644.1 89.6,638.7 92.2,640.0 94.8,645.3 97.4,640.3 100.0,645.3 102.6,643.9 105.2,639.6 107.8,645.4 110.4,640.3 113.0,644.1 115.5,638.9 118.1,644.4 120.7,640.5 123.3,643.6 125.9,644.2 128.5,638.5 131.1,644.3 133.7,639.0 136.3,645.0 138.9,645.0 141.5,640.2 144.1,643.2 146.7,639.7 149.3,639.5 151.9,640.1 154.5,639.9 157.1,640.7 159.7,640.4 162.3,644.2 164.9,638.9 167.5,643.7 170.1,640.1 172.7,644.7 175.3,639.2 177.9,643.9 180.5,638.5 183.1,639.3 185.7,639.2 188.3,600.7 190.9,639.2 193.5,638.5 196.1,640.4 198.6,643.7 201.2,639.6 203.8,643.8 206.4,639.3 209.0,643.4 211.6,640.1 214.2,639.5 216.8,643.8 219.4,643.2 222.0,640.6 224.6,644.7 227.2,639.9 229.8,639.4 232.4,643.5 235.0,640.6 237.6,643.1 240.2,644.0 242.8,639.3 245.4,638.9 248.0,643.8 250.6,640.8 253.2,644.7 255.8,644.9 258.4,639.4 261.0,643.8 263.6,639.3 266.2,643.9 268.8,639.0 271.4,648.4 274.0,644.8 276.6,644.3 279.2,639.7 281.7,644.7 284.3,644.2 286.9,638.8 289.5,645.3 292.1,640.4 294.7,633.4 297.3,639.2 299.9,645.2 302.5,639.8 305.1,645.3 307.7,638.7 310.3,644.3 312.9,640.2 315.5,638.5 318.1,639.4 320.7,645.0 323.3,638.7 325.9,644.4 328.5,643.4 331.1,640.7 333.7,643.4 336.3,645.2 338.9,640.1 341.5,644.8 344.1,639.4 346.7,640.8 349.3,644.1 351.9,639.9 354.5,643.4 357.1,640.2 359.7,643.8 362.3,640.8 364.8,643.3 367.4,644.4 370.0,639.9 372.6,644.6 375.2,644.8 377.8,638.5 380.4,638.8 383.0,644.0 385.6,638.7 388.2,644.2 390.8,638.7 393.4,643.1 396.0,638.7 398.6,644.4 401.2,643.7 403.8,640.7 406.4,644.0 409.0,639.9 411.6,644.6 414.2,640.3 416.8,643.9 419.4,626.7 422.0,638.5 424.6,645.1 427.2,638.9 429.8,644.8 432.4,638.7 435.0,644.9 437.6,643.1 440.2,598.7 442.8,641.1 445.4,640.7 447.9,638.9 450.5,643.8 453.1,640.8 455.7,645.1 458.3,639.7 460.9,638.5 463.5,643.5 466.1,638.6 468.7,640.4 471.3,640.0 473.9,643.4 476.5,645.4 479.1,629.6 481.7,645.1 484.3,640.6 486.9,643.7 489.5,645.1 492.1,640.6 494.7,645.2 497.3,640.7 499.9,643.7 502.5,640.4 505.1,643.5 507.7,639.0 510.3,644.6 512.9,644.4 515.5,640.1 518.1,639.3 520.7,644.5 523.3,638.5 525.9,644.2 528.5,640.8 531.0,643.1 533.6,623.8 536.2,639.2 538.8,626.7 541.4,619.9 544.0,592.9 546.6,591.0 549.2,619.9 551.8,622.8 554.4,581.4 557.0,610.3 559.6,638.3 562.2,641.1 564.8,595.8 567.4,592.9 570.0,609.3" fill="none" stroke="#f06ba8" stroke-width="1.1" stroke-linejoin="round"/>
<polyline points="74.0,639.2 76.6,631.7 79.2,638.5 81.8,632.9 84.4,638.4 87.0,632.4 89.6,637.7 92.2,631.9 94.8,638.6 97.4,638.8 100.0,637.9 102.6,631.5 105.2,632.7 107.8,639.5 110.4,631.0 113.0,633.1 115.5,639.0 118.1,633.2 120.7,632.4 123.3,637.6 125.9,631.8 128.5,637.8 131.1,631.2 133.7,633.1 136.3,639.1 138.9,631.8 141.5,637.5 144.1,633.3 146.7,638.5 149.3,633.1 151.9,637.8 154.5,639.7 157.1,637.5 159.7,631.1 162.3,639.1 164.9,632.3 167.5,638.3 170.1,618.0 172.7,639.3 175.3,632.3 177.9,638.3 180.5,633.0 183.1,637.4 185.7,637.3 188.3,623.8 190.9,638.3 193.5,632.2 196.1,631.5 198.6,639.5 201.2,631.6 203.8,632.4 206.4,631.3 209.0,639.1 211.6,632.4 214.2,637.5 216.8,632.3 219.4,638.2 222.0,631.9 224.6,639.6 227.2,632.6 229.8,638.7 232.4,632.5 235.0,631.9 237.6,639.1 240.2,637.4 242.8,631.6 245.4,638.3 248.0,632.9 250.6,637.6 253.2,631.3 255.8,638.5 258.4,638.7 261.0,638.8 263.6,637.5 266.2,631.6 268.8,623.3 271.4,632.3 274.0,638.5 276.6,633.3 279.2,632.4 281.7,638.7 284.3,632.7 286.9,638.7 289.5,631.7 292.1,637.3 294.7,624.8 297.3,639.1 299.9,631.3 302.5,637.4 305.1,639.6 307.7,631.3 310.3,638.5 312.9,637.9 315.5,631.2 318.1,638.4 320.7,639.3 323.3,633.1 325.9,638.4 328.5,633.3 331.1,637.6 333.7,631.8 336.3,637.9 338.9,632.4 341.5,638.6 344.1,639.6 346.7,632.8 349.3,639.4 351.9,631.9 354.5,638.0 357.1,632.1 359.7,638.8 362.3,633.0 364.8,639.7 367.4,639.4 370.0,633.3 372.6,638.3 375.2,633.2 377.8,637.5 380.4,631.8 383.0,628.6 385.6,632.3 388.2,638.1 390.8,631.4 393.4,637.6 396.0,638.8 398.6,632.9 401.2,637.9 403.8,638.2 406.4,631.1 409.0,638.6 411.6,631.2 414.2,638.2 416.8,631.3 419.4,624.8 422.0,632.3 424.6,638.0 427.2,633.2 429.8,638.9 432.4,632.7 435.0,639.0 437.6,622.8 440.2,639.0 442.8,633.1 445.4,638.7 447.9,639.6 450.5,638.4 453.1,638.0 455.7,632.5 458.3,631.3 460.9,638.2 463.5,632.5 466.1,638.2 468.7,632.1 471.3,638.6 473.9,623.8 476.5,631.6 479.1,632.7 481.7,638.5 484.3,632.1 486.9,631.9 489.5,633.3 492.1,639.2 494.7,633.2 497.3,639.5 499.9,631.9 502.5,639.1 505.1,632.8 507.7,639.1 510.3,631.6 512.9,638.1 515.5,638.9 518.1,632.1 520.7,639.0 523.3,638.3 525.9,638.9 528.5,639.2 531.0,639.2 533.6,614.2 536.2,634.4 538.8,615.1 541.4,607.4 544.0,565.0 546.6,572.7 549.2,610.3 551.8,614.2 554.4,552.5 557.0,594.9 559.6,637.3 562.2,634.4 564.8,574.6 567.4,566.9 570.0,588.1" fill="none" stroke="#0b2161" stroke-width="1.1" stroke-linejoin="round"/>
<line x1="73.5" y1="658.5" x2="570.5" y2="658.5" stroke="#d0111f" stroke-width="1.15"/>
<circle cx="76.3" cy="658.5" r="2.6" fill="#d0111f"/>
<circle cx="567.6" cy="658.5" r="2.6" fill="#d0111f"/>
<circle cx="76.3" cy="639.2" r="2.6" fill="#0b2161"/>
<circle cx="270.5" cy="648.4" r="2.6" fill="#f06ba8"/>
<circle cx="554.5" cy="552.5" r="2.6" fill="#0b2161"/>
<circle cx="554.5" cy="566.0" r="2.0" fill="#4dc0bb"/>
<circle cx="554.5" cy="581.4" r="2.0" fill="#f06ba8"/>
<rect x="73.5" y="548.5" width="497.0" height="114.0" fill="none" stroke="#000" stroke-width="1.2"/>
<line x1="96.5" y1="662.5" x2="96.5" y2="664.6" stroke="#000" stroke-width="1"/>
<line x1="138.5" y1="662.5" x2="138.5" y2="664.6" stroke="#000" stroke-width="1"/>
<line x1="180.5" y1="662.5" x2="180.5" y2="664.6" stroke="#000" stroke-width="1"/>
<line x1="221.5" y1="662.5" x2="221.5" y2="664.6" stroke="#000" stroke-width="1"/>
<line x1="263.5" y1="662.5" x2="263.5" y2="664.6" stroke="#000" stroke-width="1"/>
<line x1="305.5" y1="662.5" x2="305.5" y2="664.6" stroke="#000" stroke-width="1"/>
<line x1="346.5" y1="662.5" x2="346.5" y2="664.6" stroke="#000" stroke-width="1"/>
<line x1="388.5" y1="662.5" x2="388.5" y2="664.6" stroke="#000" stroke-width="1"/>
<line x1="429.5" y1="662.5" x2="429.5" y2="664.6" stroke="#000" stroke-width="1"/>
<line x1="471.5" y1="662.5" x2="471.5" y2="664.6" stroke="#000" stroke-width="1"/>
<line x1="513.5" y1="662.5" x2="513.5" y2="664.6" stroke="#000" stroke-width="1"/>
<line x1="554.5" y1="662.5" x2="554.5" y2="664.6" stroke="#000" stroke-width="1"/>
<line x1="70.0" y1="562.1" x2="73.5" y2="562.1" stroke="#000" stroke-width="1"/>
<line x1="70.0" y1="610.3" x2="73.5" y2="610.3" stroke="#000" stroke-width="1"/>
<line x1="70.0" y1="658.5" x2="73.5" y2="658.5" stroke="#000" stroke-width="1"/>
<text x="66.3" y="565.5" font-size="9.3" text-anchor="end" fill="#000">10.0</text>
<text x="66.3" y="613.7" font-size="9.3" text-anchor="end" fill="#000">5.0</text>
<text x="66.3" y="661.9" font-size="9.3" text-anchor="end" fill="#000">0.0</text>
<text transform="translate(43.3,606.6) rotate(-90)" font-size="10.8" text-anchor="middle" fill="#000" stroke="#000" stroke-width="0.1">%</text>
<text transform="translate(93.7,685.3) rotate(-90)" font-size="9.6" text-anchor="middle" textLength="17.5" lengthAdjust="spacingAndGlyphs" fill="#000">2/11</text>
<text transform="translate(107.1,667.8) rotate(-90)" font-size="9.6" text-anchor="end" textLength="35.0" lengthAdjust="spacingAndGlyphs" fill="#000">4:00 AM</text>
<text transform="translate(135.7,685.3) rotate(-90)" font-size="9.6" text-anchor="middle" textLength="17.5" lengthAdjust="spacingAndGlyphs" fill="#000">2/11</text>
<text transform="translate(149.1,667.8) rotate(-90)" font-size="9.6" text-anchor="end" textLength="35.0" lengthAdjust="spacingAndGlyphs" fill="#000">8:00 AM</text>
<text transform="translate(177.7,687.5) rotate(-90)" font-size="9.6" text-anchor="middle" textLength="17.5" lengthAdjust="spacingAndGlyphs" fill="#000">2/11</text>
<text transform="translate(191.1,667.8) rotate(-90)" font-size="9.6" text-anchor="end" textLength="39.5" lengthAdjust="spacingAndGlyphs" fill="#000">12:00 PM</text>
<text transform="translate(218.7,685.3) rotate(-90)" font-size="9.6" text-anchor="middle" textLength="17.5" lengthAdjust="spacingAndGlyphs" fill="#000">2/11</text>
<text transform="translate(232.1,667.8) rotate(-90)" font-size="9.6" text-anchor="end" textLength="35.0" lengthAdjust="spacingAndGlyphs" fill="#000">4:00 PM</text>
<text transform="translate(260.7,685.3) rotate(-90)" font-size="9.6" text-anchor="middle" textLength="17.5" lengthAdjust="spacingAndGlyphs" fill="#000">2/11</text>
<text transform="translate(274.1,667.8) rotate(-90)" font-size="9.6" text-anchor="end" textLength="35.0" lengthAdjust="spacingAndGlyphs" fill="#000">8:00 PM</text>
<text transform="translate(302.7,687.5) rotate(-90)" font-size="9.6" text-anchor="middle" textLength="17.5" lengthAdjust="spacingAndGlyphs" fill="#000">2/12</text>
<text transform="translate(316.1,667.8) rotate(-90)" font-size="9.6" text-anchor="end" textLength="39.5" lengthAdjust="spacingAndGlyphs" fill="#000">12:00 AM</text>
<text transform="translate(343.7,685.3) rotate(-90)" font-size="9.6" text-anchor="middle" textLength="17.5" lengthAdjust="spacingAndGlyphs" fill="#000">2/12</text>
<text transform="translate(357.1,667.8) rotate(-90)" font-size="9.6" text-anchor="end" textLength="35.0" lengthAdjust="spacingAndGlyphs" fill="#000">4:00 AM</text>
<text transform="translate(385.7,685.3) rotate(-90)" font-size="9.6" text-anchor="middle" textLength="17.5" lengthAdjust="spacingAndGlyphs" fill="#000">2/12</text>
<text transform="translate(399.1,667.8) rotate(-90)" font-size="9.6" text-anchor="end" textLength="35.0" lengthAdjust="spacingAndGlyphs" fill="#000">8:00 AM</text>
<text transform="translate(426.7,687.5) rotate(-90)" font-size="9.6" text-anchor="middle" textLength="17.5" lengthAdjust="spacingAndGlyphs" fill="#000">2/12</text>
<text transform="translate(440.1,667.8) rotate(-90)" font-size="9.6" text-anchor="end" textLength="39.5" lengthAdjust="spacingAndGlyphs" fill="#000">12:00 PM</text>
<text transform="translate(468.7,685.3) rotate(-90)" font-size="9.6" text-anchor="middle" textLength="17.5" lengthAdjust="spacingAndGlyphs" fill="#000">2/12</text>
<text transform="translate(482.1,667.8) rotate(-90)" font-size="9.6" text-anchor="end" textLength="35.0" lengthAdjust="spacingAndGlyphs" fill="#000">4:00 PM</text>
<text transform="translate(510.7,685.3) rotate(-90)" font-size="9.6" text-anchor="middle" textLength="17.5" lengthAdjust="spacingAndGlyphs" fill="#000">2/12</text>
<text transform="translate(524.1,667.8) rotate(-90)" font-size="9.6" text-anchor="end" textLength="35.0" lengthAdjust="spacingAndGlyphs" fill="#000">8:00 PM</text>
<text transform="translate(551.7,687.5) rotate(-90)" font-size="9.6" text-anchor="middle" textLength="17.5" lengthAdjust="spacingAndGlyphs" fill="#000">2/13</text>
<text transform="translate(565.1,667.8) rotate(-90)" font-size="9.6" text-anchor="end" textLength="39.5" lengthAdjust="spacingAndGlyphs" fill="#000">12:00 AM</text>
<text x="304" y="528.8" font-size="10" text-anchor="middle" textLength="112.4" lengthAdjust="spacingAndGlyphs" fill="#000">Sensor: CPU Load (2 days)</text>
<text x="304.7" y="541.7" font-size="10" text-anchor="middle" textLength="81.8" lengthAdjust="spacingAndGlyphs" fill="#000">Clients / paneavista</text>
<rect x="521" y="553.0" width="49" height="10" fill="#fff" opacity="0.7"/>
<text x="523" y="561.3" font-size="8.2" fill="#333">Max: 9.60 %</text>
<rect x="75" y="642.0" width="45" height="10" fill="#fff" opacity="0.6"/>
<text x="75.2" y="650.3" font-size="8.2" fill="#333" textLength="43.4" lengthAdjust="spacing">Min: 2.00 %</text>
<text x="33" y="717.5" font-size="7.2" fill="#a9a9a9" textLength="114" lengthAdjust="spacingAndGlyphs">PRTG Network Monitor 17.1.30.1326</text>
<text x="431" y="717.5" font-size="7.2" fill="#a9a9a9" textLength="148" lengthAdjust="spacingAndGlyphs">2/13/2017 1:36:14 AM - 5 m Average - ID 2530</text>
<rect x="461" y="724" width="17" height="18" fill="#d4d5d8"/>
<rect x="480" y="724" width="13" height="18" fill="#d4d5d8"/>
<rect x="495" y="724" width="16" height="18" fill="#d4d5d8"/>
<rect x="513" y="724" width="16" height="18" fill="#d4d5d8"/>
<rect x="531" y="724" width="13" height="18" fill="#d4d5d8"/>
<rect x="546" y="724" width="13" height="18" fill="#d4d5d8"/>
<rect x="561" y="724" width="17" height="18" fill="#d4d5d8"/>
<path d="M468.7 730.3 L467.2 732.2 L468.7 734.1" fill="none" stroke="#3a477a" stroke-width="0.95" stroke-linejoin="round" stroke-linecap="round"/>
<path d="M472.2 730.3 L470.7 732.2 L472.2 734.1" fill="none" stroke="#3a477a" stroke-width="0.95" stroke-linejoin="round" stroke-linecap="round"/>
<path d="M487.3 730.3 L485.8 732.2 L487.3 734.1" fill="none" stroke="#3a477a" stroke-width="0.95" stroke-linejoin="round" stroke-linecap="round"/>
<path d="M552.3 730.3 L553.8 732.2 L552.3 734.1" fill="none" stroke="#3a477a" stroke-width="0.95" stroke-linejoin="round" stroke-linecap="round"/>
<path d="M567.4 730.3 L568.9 732.2 L567.4 734.1" fill="none" stroke="#3a477a" stroke-width="0.95" stroke-linejoin="round" stroke-linecap="round"/>
<path d="M570.9 730.3 L572.4 732.2 L570.9 734.1" fill="none" stroke="#3a477a" stroke-width="0.95" stroke-linejoin="round" stroke-linecap="round"/>
<path d="M500 732.7 H506.2 M503.1 729.6 V735.8" stroke="#1a2a5e" stroke-width="1.15" fill="none"/>
<path d="M518.6 729.9 L523.8 734.9 M523.8 729.9 L518.6 734.9" stroke="#1a2a5e" stroke-width="1.15" fill="none"/>
<path d="M535.8 732.4 H539.3" stroke="#1a2a5e" stroke-width="1.4" fill="none"/>
</svg>
<div class="lg" style="top:52px"><span class="bx" style="border-color:#d0111f"></span><span class="nm" style="letter-spacing:0.1px">Downtime</span><span class="un">(%)</span></div>
<div class="lg" style="top:72px"><span class="bx" style="border-color:#4dc0bb"></span><span class="nm">Total</span><span class="un">(%)</span></div>
<div class="lg" style="top:92px"><span class="bx" style="border-color:#0b2161"></span><span class="nm">Processor 1</span><span class="un">(%)</span></div>
<div class="lg" style="top:112px"><span class="bx" style="border-color:#f06ba8"></span><span class="nm">Processor 2</span><span class="un">(%)</span></div>
<div class="btn" style="left:693px;top:135px;width:61px">Show all</div>
<div class="btn" style="left:766px;top:135px;width:57px">Hide all</div>
<div class="btn" style="left:716px;top:172px;width:112px;letter-spacing:-0.1px">Select New Sensor</div>
</div>
</body></html>
